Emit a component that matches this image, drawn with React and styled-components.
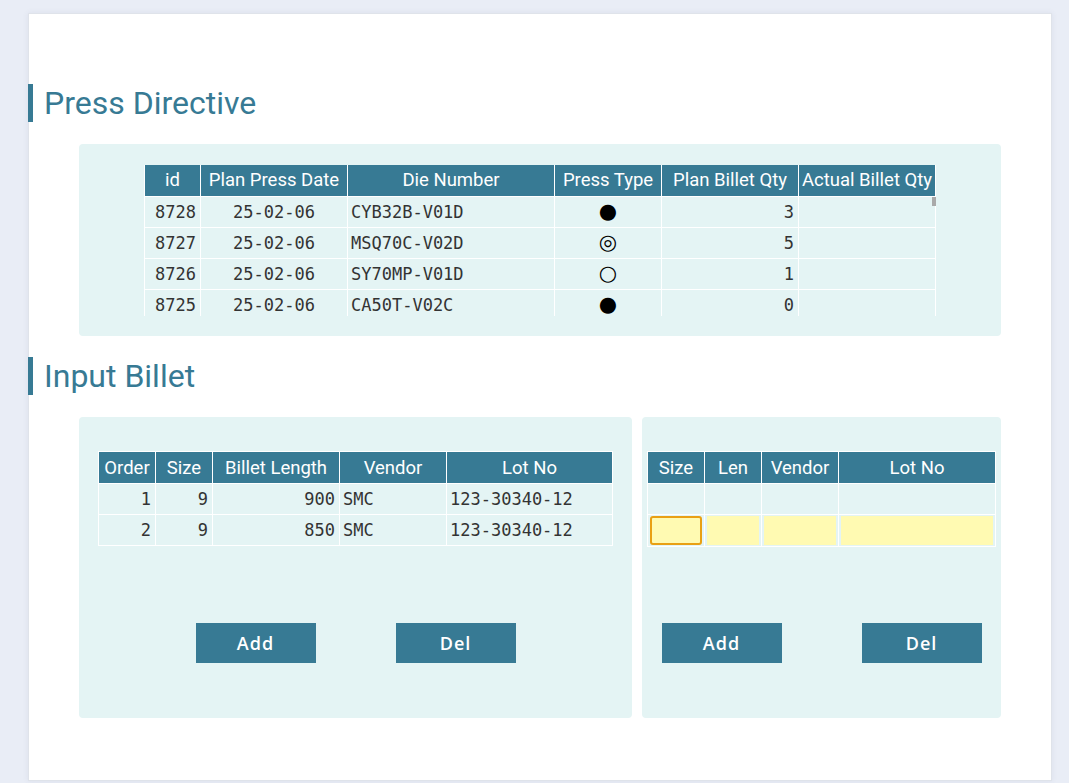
import React from "react";
import styled, { createGlobalStyle } from "styled-components";

const GlobalStyle = createGlobalStyle`
  html, body {
    margin: 0;
    padding: 0;
    background: #e9edf6;
    font-family: Roboto, "Liberation Sans", sans-serif;
  }
  * {
    box-sizing: border-box;
  }
`;

const Page = styled.div`
  padding: 13px 0 0 28px;
  min-height: 783px;
`;

const Card = styled.div`
  width: 1024px;
  height: 768px;
  background: #ffffff;
  border: 1px solid #dfe3ea;
  box-shadow: 0 0 6px rgba(60, 70, 100, 0.08);
  padding-top: 70px;
  display: flex;
  flex-direction: column;
`;

const Title = styled.h2`
  margin: 0 0 ${({ gap }) => gap || 22}px -1px;
  height: 38px;
  border-left: 5px solid #377a94;
  padding-left: 11px;
  display: flex;
  align-items: center;
  font-family: Roboto, sans-serif;
  font-weight: 400;
  font-size: 32px;
  color: #377a94;
`;

const Panel = styled.div`
  background: #e4f4f4;
  border-radius: 4px;
  padding: ${({ pad }) => pad};
  display: flex;
  flex-direction: column;
  align-items: ${({ center }) => (center ? "center" : "stretch")};
`;

const PressPanel = styled(Panel)`
  margin: 0 50px 21px 50px;
`;

const PanelRow = styled.div`
  display: flex;
  gap: 10px;
  margin: 0 50px;
`;

const ScrollFrame = styled.div`
  position: relative;
  width: 792px;
  height: 151px;
`;

const ScrollBox = styled.div`
  width: 100%;
  height: 100%;
  overflow-y: auto;
  scrollbar-width: none;
  &::-webkit-scrollbar {
    display: none;
  }
`;

const ScrollThumb = styled.div`
  position: absolute;
  right: 0;
  top: 32px;
  width: 4px;
  height: 9px;
  background: #a9a9a9;
`;

const Table = styled.table`
  table-layout: fixed;
  border-collapse: collapse;
  width: ${({ w }) => w}px;
`;

const Th = styled.th`
  background: #377a94;
  color: #ffffff;
  font-family: Roboto, sans-serif;
  font-weight: 400;
  font-size: 18.5px;
  height: 31px;
  padding: 0;
  border: 1px solid #ffffff;
  border-top: none;
  white-space: nowrap;
  overflow: hidden;
  position: sticky;
  top: 0;
`;

const Td = styled.td`
  height: 31px;
  padding: 0 ${({ align }) => (align === "right" ? 4 : 3)}px 0 3px;
  border: 1px solid #ffffff;
  font-family: "DejaVu Sans Mono", monospace;
  font-size: 17px;
  color: #333333;
  text-align: ${({ align }) => align || "left"};
  white-space: nowrap;
`;

const Mark = styled.span`
  font-family: "DejaVu Sans", sans-serif;
  font-size: 21px;
  line-height: 1;
  color: #000000;
`;

const BilletTable = styled(Table)`
  border: 1px solid #ffffff;
  & th {
    position: static;
    height: 32px;
  }
`;

const TableArea = styled.div`
  height: 172px;
`;

const InputCell = styled.td`
  height: 31px;
  padding: 1px 2px;
  border: 1px solid #ffffff;
`;

const Field = styled.input`
  display: block;
  width: 100%;
  height: 29px;
  border: 2px solid ${({ focused }) => (focused ? "#e9a014" : "transparent")};
  border-radius: ${({ focused }) => (focused ? 3 : 0)}px;
  background: #fffab2;
  outline: none;
  padding: 0 4px;
  font-family: "DejaVu Sans Mono", monospace;
  font-size: 16px;
`;

const ButtonBar = styled.div`
  display: flex;
  justify-content: center;
  gap: 80px;
`;

const Button = styled.button`
  width: 120px;
  height: 40px;
  background: #377a94;
  color: #ffffff;
  border: none;
  font-family: "Open Sans", sans-serif;
  font-weight: 600;
  font-size: 18px;
  letter-spacing: 1px;
  cursor: pointer;
`;

const marks = { full: "●", double: "◎", empty: "○" };

const pressRows = [
  { id: 8728, date: "25-02-06", die: "CYB32B-V01D", type: "full", plan: 3 },
  { id: 8727, date: "25-02-06", die: "MSQ70C-V02D", type: "double", plan: 5 },
  { id: 8726, date: "25-02-06", die: "SY70MP-V01D", type: "empty", plan: 1 },
  { id: 8725, date: "25-02-06", die: "CA50T-V02C", type: "full", plan: 0 },
];
const dies = ["CYB40B-V01A", "MSQ50C-V01B", "SY50MP-V02D", "CA40T-V01C", "CYB25B-V03D"];
const types = ["full", "double", "empty"];
for (let i = 0; i < 86; i++) {
  pressRows.push({
    id: 8724 - i,
    date: i < 20 ? "25-02-05" : "25-02-04",
    die: dies[i % dies.length],
    type: types[i % 3],
    plan: (i * 7) % 9,
  });
}

const billets = [
  { order: 1, size: 9, len: 900, vendor: "SMC", lot: "123-30340-12" },
  { order: 2, size: 9, len: 850, vendor: "SMC", lot: "123-30340-12" },
];

const PressTable = () => (
  <ScrollFrame>
    <ScrollBox>
      <Table w={792}>
        <colgroup>
          <col style={{ width: 56 }} />
          <col style={{ width: 147 }} />
          <col style={{ width: 207 }} />
          <col style={{ width: 107 }} />
          <col style={{ width: 137 }} />
          <col />
        </colgroup>
        <thead>
          <tr>
            <Th>id</Th>
            <Th>Plan Press Date</Th>
            <Th>Die Number</Th>
            <Th>Press Type</Th>
            <Th>Plan Billet Qty</Th>
            <Th>Actual Billet Qty</Th>
          </tr>
        </thead>
        <tbody>
          {pressRows.map((r) => (
            <tr key={r.id}>
              <Td align="right">{r.id}</Td>
              <Td align="center">{r.date}</Td>
              <Td>{r.die}</Td>
              <Td align="center">
                <Mark>{marks[r.type]}</Mark>
              </Td>
              <Td align="right">{r.plan}</Td>
              <Td />
            </tr>
          ))}
        </tbody>
      </Table>
    </ScrollBox>
    <ScrollThumb />
  </ScrollFrame>
);

const Buttons = () => (
  <ButtonBar>
    <Button>Add</Button>
    <Button>Del</Button>
  </ButtonBar>
);

const App = () => {
  return (
    <Page>
      <GlobalStyle />
      <Card>
        <Title>Press Directive</Title>
        <PressPanel pad="21px 0 20px" center>
          <PressTable />
        </PressPanel>
        <Title gap={22}>Input Billet</Title>
        <PanelRow>
          <Panel pad="34px 19px 55px" style={{ width: 553 }}>
            <TableArea>
              <BilletTable w={515}>
                <colgroup>
                  <col style={{ width: 57 }} />
                  <col style={{ width: 57 }} />
                  <col style={{ width: 127 }} />
                  <col style={{ width: 107 }} />
                  <col />
                </colgroup>
                <thead>
                  <tr>
                    <Th>Order</Th>
                    <Th>Size</Th>
                    <Th>Billet Length</Th>
                    <Th>Vendor</Th>
                    <Th>Lot No</Th>
                  </tr>
                </thead>
                <tbody>
                  {billets.map((b) => (
                    <tr key={b.order}>
                      <Td align="right">{b.order}</Td>
                      <Td align="right">{b.size}</Td>
                      <Td align="right">{b.len}</Td>
                      <Td>{b.vendor}</Td>
                      <Td>{b.lot}</Td>
                    </tr>
                  ))}
                </tbody>
              </BilletTable>
            </TableArea>
            <Buttons />
          </Panel>
          <Panel pad="34px 5px 55px" style={{ flex: 1 }}>
            <TableArea>
              <BilletTable w={349}>
                <colgroup>
                  <col style={{ width: 57 }} />
                  <col style={{ width: 57 }} />
                  <col style={{ width: 77 }} />
                  <col />
                </colgroup>
                <thead>
                  <tr>
                    <Th>Size</Th>
                    <Th>Len</Th>
                    <Th>Vendor</Th>
                    <Th>Lot No</Th>
                  </tr>
                </thead>
                <tbody>
                  <tr>
                    <Td />
                    <Td />
                    <Td />
                    <Td />
                  </tr>
                  <tr>
                    <InputCell>
                      <Field focused />
                    </InputCell>
                    <InputCell>
                      <Field />
                    </InputCell>
                    <InputCell>
                      <Field />
                    </InputCell>
                    <InputCell>
                      <Field />
                    </InputCell>
                  </tr>
                </tbody>
              </BilletTable>
            </TableArea>
            <Buttons />
          </Panel>
        </PanelRow>
      </Card>
    </Page>
  );
};

export default App;
